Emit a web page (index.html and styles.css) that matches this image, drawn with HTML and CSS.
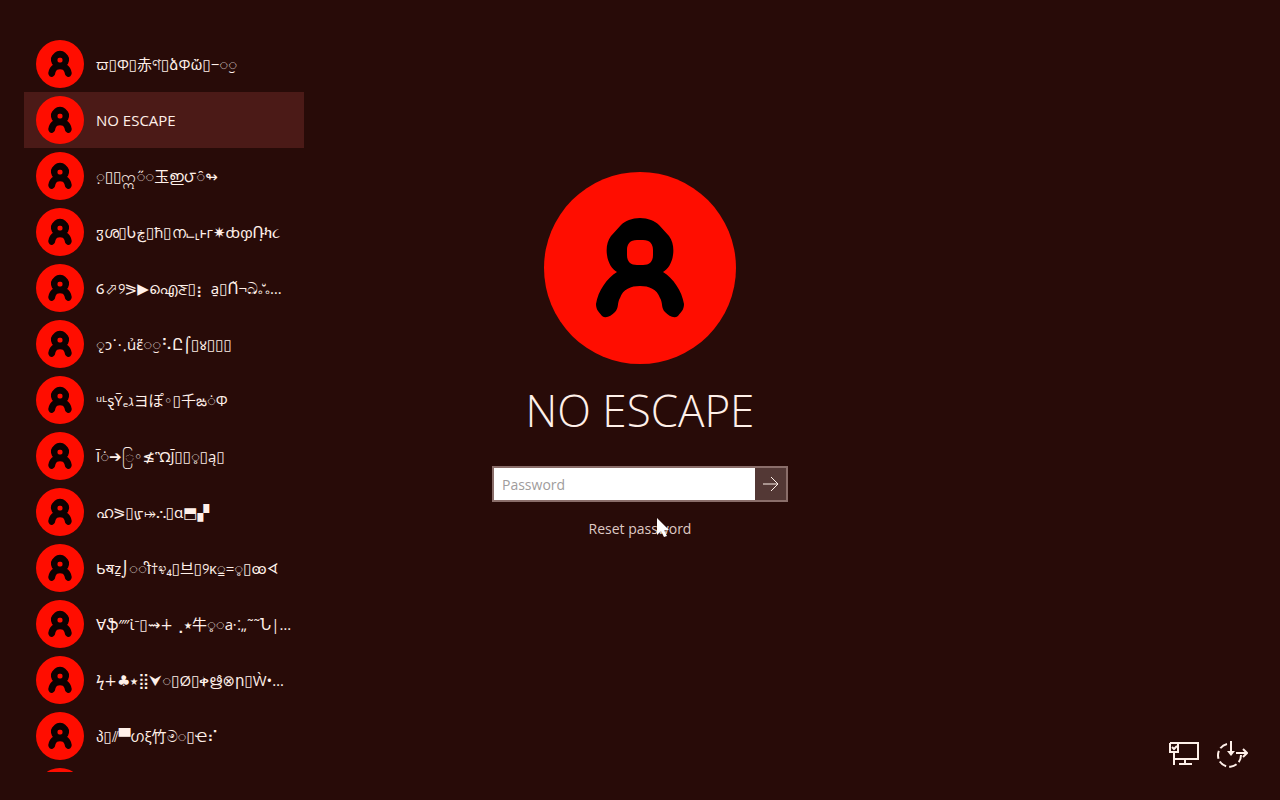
FILE: index.html
```html
<!DOCTYPE html>
<html lang="en">
<head>
    <meta charset="UTF-8">
    <meta name="viewport" content="width=device-width, initial-scale=1.0">
    <title>NO ESCAPE</title>
    <link rel="stylesheet" href="styles.css">
</head>
<body>
    <!-- shared avatar figure -->
    <svg class="defs" width="0" height="0" aria-hidden="true">
        <symbol id="person" viewBox="0 0 192 192">
            <path fill-rule="evenodd" d="M96 46C104 46 111 49 115 53L125 64C129 69 130 77 129 83C128 91 124 97 119 100C129 106 138 119 140 132C140 138 137 140 134 144C130 147 125 144 121 140C117 136 119 131 116 126C113 117 105 114 96 114C87 114 79 117 76 126C73 131 75 136 71 140C67 144 62 147 58 144C55 140 52 138 52 132C54 119 63 106 73 100C68 97 64 91 63 83C62 77 63 69 67 64L77 53C81 49 88 46 96 46ZM93 68C86 68 83 72 83 78V83C83 90 87 93 93 93H99C105 93 109 90 109 83V78C109 72 106 68 99 68Z"/>
        </symbol>
    </svg>

    <div class="screen">
        <!-- account list -->
        <nav class="users" aria-label="Accounts">
            <button class="user" type="button"><span class="avatar"><svg><use href="#person"/></svg></span><span class="name">ϖ▯Ф▯赤ণ▯ձФὤ▯−◌ॖ</span></button>
            <button class="user active" type="button"><span class="avatar"><svg><use href="#person"/></svg></span><span class="name">NO ESCAPE</span></button>
            <button class="user" type="button"><span class="avatar"><svg><use href="#person"/></svg></span><span class="name">◌़▯▯ဣ◌̋◌玉ഇ౮◌̑↬</span></button>
            <button class="user" type="button"><span class="avatar"><svg><use href="#person"/></svg></span><span class="name">ჳശ▯Ⴑڿ▯ћ▯ന⨽⸤ⱶг✷ȸჶՌ̣ካ૮</span></button>
            <button class="user" type="button"><span class="avatar"><svg><use href="#person"/></svg></span><span class="name">Ⳓ⬀୨⪖▶ഐਣ▯⡆ a̱▯Ո̌¬ඛஃ…</span></button>
            <button class="user" type="button"><span class="avatar"><svg><use href="#person"/></svg></span><span class="name">◌ृɔ⋱ủἕ◌ॖ⠣Ը⌠▯४▯▯▯</span></button>
            <button class="user" type="button"><span class="avatar"><svg><use href="#person"/></svg></span><span class="name">ᵘᴸȿỸₑℷヨぽ◦▯千ఙ◌̇Ф</span></button>
            <button class="user" type="button"><span class="avatar"><svg><use href="#person"/></svg></span><span class="name">Ĩ◌̇➔ြ◦≰ὫJ̄▯▯◌̥▯ą▯</span></button>
            <button class="user" type="button"><span class="avatar"><svg><use href="#person"/></svg></span><span class="name">ഹ⪖▯ᡁ⤅⛬▯ɑ⬒▞</span></button>
            <button class="user" type="button"><span class="avatar"><svg><use href="#person"/></svg></span><span class="name">Ƅॺẕ⌡◌ी†೪₄▯브▯୨κ◌̳=◌̥▯ꙭᗏ</span></button>
            <button class="user" type="button"><span class="avatar"><svg><use href="#person"/></svg></span><span class="name">∀ֆ⁗ἰ⁻▯⇝∔⢀⭑牛◌̥◌a⁖„˜˜Ն|…</span></button>
            <button class="user" type="button"><span class="avatar"><svg><use href="#person"/></svg></span><span class="name">ϟ∔♣⭑⣿⮟◌▯Ø▯ቀഋ̂⊗ր▯Ẁ•…</span></button>
            <button class="user" type="button"><span class="avatar"><svg><use href="#person"/></svg></span><span class="name">პ▯⫽▀ഗξ竹ම◌▯Ҽ⠎</span></button>
            <button class="user" type="button" aria-label="Account"><span class="avatar"><svg><use href="#person"/></svg></span></button>
        </nav>

        <!-- sign-in -->
        <main class="login">
            <span class="avatar big"><svg><use href="#person"/></svg></span>
            <h1 class="title">NO ESCAPE</h1>
            <form class="password-form">
                <input class="password" type="password" placeholder="Password" aria-label="Password">
                <button class="submit" type="button" aria-label="Submit">
                    <svg width="18" height="18" viewBox="0 0 18 18"><path d="M1 9H16M9 2L16 9L9 16"/></svg>
                </button>
            </form>
            <a class="reset" href="#">Reset password
                <svg class="cursor" width="13" height="20" viewBox="0 0 13 20"><path d="M0 0V17L4 13L7 19L10 18L7 12H12Z"/></svg>
            </a>
        </main>

        <!-- corner tools -->
        <div class="tools">
            <button class="tool" type="button" aria-label="Network">
                <svg width="32" height="32" viewBox="0 0 32 32">
                    <path d="M2 3H30V19H6M2 3V12H10V3M6 12V25M17 19V24M11 24H24"/>
                    <path d="M4 7L6 9L9 6"/>
                </svg>
            </button>
            <button class="tool" type="button" aria-label="Power">
                <svg width="32" height="32" viewBox="0 0 32 32">
                    <path class="dashed" d="M11 4A11.5 11.5 0 1 0 25 15"/>
                    <path d="M15 1V13M20 13H30M27 9L31 13L27 17"/>
                    <path class="solid" d="M11 11H19L15 16Z"/>
                </svg>
            </button>
        </div>
    </div>
</body>
</html>
```

FILE: styles.css
```css
* {
    margin: 0;
    padding: 0;
    box-sizing: border-box;
}

body {
    background: #280b08;
    color: #fff0e9;
    font-family: "Open Sans", "Noto Sans", "DejaVu Sans", "Noto Sans CJK SC", "Noto Sans CJK KR", sans-serif;
    font-size: 14px;
}

button {
    border: none;
    background: none;
    color: inherit;
    font: inherit;
    cursor: pointer;
}

.defs {
    position: absolute;
}

.screen {
    display: grid;
    grid-template-columns: 280px 1fr 280px;
    height: 100vh;
    padding: 36px 24px 28px;
}

/* account list */
.users {
    overflow: hidden;
}

.user {
    display: flex;
    align-items: center;
    gap: 12px;
    width: 100%;
    height: 56px;
    padding: 0 12px;
    text-align: left;
}

.user.active {
    background: #4b1a17;
}

.name {
    font-size: 15px;
    line-height: 24px;
    white-space: nowrap;
}

.avatar {
    display: block;
    flex-shrink: 0;
    width: 48px;
    height: 48px;
    border-radius: 50%;
    background: #ff0d00;
}

.avatar svg {
    display: block;
    width: 100%;
    height: 100%;
    fill: #0c0202;
    stroke: #0c0202;
    stroke-width: 6;
}

.avatar.big {
    width: 192px;
    height: 192px;
}

.avatar.big svg {
    fill: #000;
    stroke: none;
}

/* sign-in */
.login {
    display: flex;
    flex-direction: column;
    align-items: center;
    padding-top: 136px;
}

.title {
    margin-top: 12px;
    font-size: 44px;
    font-weight: 300;
    line-height: 68px;
}

.password-form {
    display: flex;
    width: 296px;
    height: 36px;
    margin-top: 22px;
    border: 2px solid #8a6e6a;
}

.password {
    flex: 1;
    min-width: 0;
    padding: 0 8px;
    border: none;
    background: #fff;
    font: inherit;
    color: #222;
    outline: none;
}

.password::placeholder {
    color: #a09c9c;
}

.submit {
    display: flex;
    align-items: center;
    justify-content: center;
    width: 31px;
    background: #533835;
}

.submit svg {
    fill: none;
    stroke: #fff0e9;
}

.reset {
    position: relative;
    margin-top: 16px;
    color: #dfc9c4;
    line-height: 22px;
    text-decoration: none;
}

/* mouse pointer over the link */
.cursor {
    position: absolute;
    left: 68px;
    top: 0;
    fill: #fff;
}

/* corner tools */
.tools {
    display: flex;
    align-items: flex-end;
    justify-content: flex-end;
    gap: 16px;
    padding-right: 8px;
}

.tool {
    width: 32px;
    height: 32px;
}

.tool svg {
    display: block;
    fill: none;
    stroke: #fff0e9;
    stroke-width: 2;
}

.tool .dashed {
    stroke-dasharray: 8 3;
}

.tool .solid {
    fill: #fff0e9;
    stroke: none;
}
```
